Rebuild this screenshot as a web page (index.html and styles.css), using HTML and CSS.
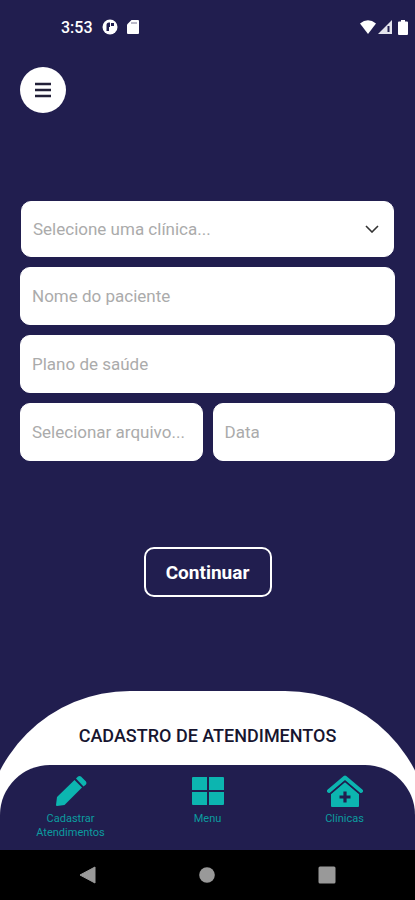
FILE: index.html
```html
<!DOCTYPE html>
<html lang="pt-BR">
<head>
  <meta charset="UTF-8" />
  <meta name="viewport" content="width=device-width, initial-scale=1.0"/>
  <title>Cadastro de Atendimentos</title>
  <link rel="stylesheet" href="styles.css">
</head>
<body>
  <div class="status-bar">
    <div class="status-left">
      <span class="clock">3:53</span>
      <svg width="16" height="16" viewBox="0 0 16 16">
        <circle cx="8" cy="8" r="7.5" fill="#fff"/>
        <path d="M4.500 12V6q0-2.500 2.500-2.500h1V8H7v4zM9 4h3v3H9z" fill="#211e4f"/>
      </svg>
      <svg width="12" height="14" viewBox="0 0 12 14">
        <path d="M4.5 0H11q1 0 1 1v12q0 1-1 1H1q-1 0-1-1V4.500z" fill="#fff"/>
        <path d="M5 2v2M7 2v2M9 2v2" stroke="#777591"/>
      </svg>
    </div>
    <div class="status-right">
      <svg width="16" height="14" viewBox="0 0 16 14">
        <path d="M0 3.500Q8-3 16 3.500L8 14z" fill="#fff"/>
      </svg>
      <svg width="14" height="14" viewBox="0 0 14 14">
        <path d="M14 0v14H0z" fill="#e4e4ec"/>
        <path d="M10.500 6v6" stroke="#211e4f" stroke-width="2"/>
      </svg>
      <svg class="battery" width="10" height="15" viewBox="0 0 10 15">
        <path d="M3 0h4v1.500h2q1 0 1 1V14q0 1-1 1H1q-1 0-1-1V2.500q0-1 1-1h2z" fill="#fff"/>
      </svg>
    </div>
  </div>

  <header class="header">
    <button class="menu-btn" type="button" aria-label="Abrir menu">
      <svg width="18" height="16" viewBox="0 0 18 16">
        <path d="M1 2h16M1 8h16M1 14h16" stroke="#222038" stroke-width="2.400"/>
      </svg>
    </button>
  </header>

  <main>
    <form class="form">
      <div class="select-box">
        <select class="field select" aria-label="Clínica">
          <option>Selecione uma clínica...</option>
        </select>
        <svg class="chevron" width="14" height="8" viewBox="0 0 14 8">
          <path d="M1 1l6 6 6-6" fill="none" stroke="#333" stroke-width="1.600"/>
        </svg>
      </div>
      <input class="field" type="text" placeholder="Nome do paciente" aria-label="Nome do paciente">
      <input class="field" type="text" placeholder="Plano de saúde" aria-label="Plano de saúde">
      <div class="row">
        <input class="field" type="text" placeholder="Selecionar arquivo..." aria-label="Selecionar arquivo">
        <input class="field" type="text" placeholder="Data" aria-label="Data">
      </div>
      <button class="submit-btn" type="button">Continuar</button>
    </form>
  </main>

  <footer class="footer">
    <div class="title-panel">
      <h1>CADASTRO DE ATENDIMENTOS</h1>
    </div>
    <nav class="tabs">
      <a class="tab" href="#">
        <svg width="32" height="32" viewBox="0 0 32 32">
          <path d="M1 30l1-8L19.500 5l7.500 7.500L9.500 30l-7.500 1q-1 0-1-1zM21 3.500l2-2q1.500-1 3 0l5 5q1 1.500 0 3l-2.500 2z" fill="#0cb5b0"/>
        </svg>
        <span>Cadastrar<br>Atendimentos</span>
      </a>
      <a class="tab" href="#">
        <svg width="32" height="32" viewBox="0 0 32 32">
          <path d="M1 2h14v13H0V3q0-1 1-1zM17 2h14q1 0 1 1v12H17zM0 17h15v13H1q-1 0-1-1zM17 17h15v12q0 1-1 1H17z" fill="#0cb5b0"/>
        </svg>
        <span>Menu</span>
      </a>
      <a class="tab" href="#">
        <svg width="36" height="32" viewBox="0 0 36 32">
          <path d="M2 16L18 2.500 34 16" fill="none" stroke="#0cb5b0" stroke-width="4" stroke-linecap="round" stroke-linejoin="round"/>
          <path d="M18 7l14 12v12q0 1-1 1H5q-1 0-1-1V19z" fill="#0cb5b0"/>
          <path d="M4 18.200L18 6.200l14 12" fill="none" stroke="#211e4f" stroke-width="1.200"/>
          <path d="M18 16.500v11M12.500 22h11" stroke="#211e4f" stroke-width="3.200"/>
        </svg>
        <span>Clínicas</span>
      </a>
    </nav>
  </footer>

  <div class="system-bar">
    <button type="button" aria-label="Voltar">
      <svg width="18" height="18" viewBox="0 0 18 18"><path d="M16 1v16L1 9z" fill="#999" stroke="#999" stroke-linejoin="round"/></svg>
    </button>
    <button type="button" aria-label="Início">
      <svg width="18" height="18" viewBox="0 0 18 18"><circle cx="9" cy="9" r="7.800" fill="#999"/></svg>
    </button>
    <button type="button" aria-label="Recentes">
      <svg width="18" height="18" viewBox="0 0 18 18"><rect x="0.500" y="0.500" width="17" height="17" rx="1.500" fill="#999"/></svg>
    </button>
  </div>
</body>
</html>
```

FILE: styles.css
```css
* {
  box-sizing: border-box;
}
body {
  margin: 0;
  min-height: 100vh;
  display: flex;
  flex-direction: column;
  background-color: #211e4f;
  font-family: Roboto, "Liberation Sans", sans-serif;
  overflow-x: hidden;
}
button {
  font-family: inherit;
  cursor: pointer;
}
svg {
  display: block;
}

.status-bar {
  display: flex;
  justify-content: space-between;
  align-items: center;
  height: 54px;
  padding: 0 7px 0 61px;
  color: #fff;
}
.status-left {
  display: flex;
  align-items: center;
  gap: 9px;
}
.status-right {
  display: flex;
  align-items: center;
  gap: 2px;
}
.battery {
  margin-left: 4px;
}
.clock {
  font-size: 16px;
  font-weight: 500;
}

.header {
  padding: 13px 20px 0;
}
.menu-btn {
  display: flex;
  align-items: center;
  justify-content: center;
  width: 46px;
  height: 46px;
  padding: 0;
  border: none;
  border-radius: 50%;
  background-color: #fff;
}

main {
  flex: 1;
  padding: 88px 20px 0;
}
.form {
  display: flex;
  flex-direction: column;
  gap: 10px;
}
.field {
  width: 100%;
  min-width: 0;
  height: 58px;
  padding: 0 11px;
  border: 1px solid #fff;
  border-radius: 10px;
  background-color: #fff;
  color: #333;
  font-family: inherit;
  font-size: 17px;
}
.field::placeholder {
  color: #ababab;
  opacity: 1;
}
.select-box {
  display: grid;
  align-items: center;
  padding: 0 1px;
}
.select-box > * {
  grid-area: 1 / 1;
}
.select {
  height: 56px;
  appearance: none;
  color: #ababab;
}
.chevron {
  justify-self: end;
  margin-right: 15px;
  pointer-events: none;
}
.row {
  display: grid;
  grid-template-columns: 1fr 1fr;
  gap: 10px;
}
.submit-btn {
  align-self: center;
  width: 128px;
  height: 50px;
  margin-top: 76px;
  padding: 0;
  border: 2px solid #fff;
  border-radius: 10px;
  background: none;
  color: #fff;
  font-size: 19px;
  font-weight: 700;
}

/* the white panel is wider than the screen so its corners are cut off */
.footer {
  overflow: hidden;
}
.title-panel {
  height: 159px;
  margin: 0 -16px;
  padding-top: 34px;
  border-radius: 146px 146px 0 0;
  background-color: #fff;
  text-align: center;
}
.title-panel h1 {
  margin: 0;
  color: #17152f;
  font-size: 18px;
  font-weight: 500;
  line-height: 22px;
}
.tabs {
  display: grid;
  grid-template-columns: repeat(3, 1fr);
  height: 85px;
  margin-top: -85px;
  padding: 10px 2px 0;
  border-radius: 50px 50px 0 0;
  background-color: #211e4f;
}
.tab {
  display: flex;
  flex-direction: column;
  align-items: center;
  gap: 5px;
  color: #0c9c9f;
  font-size: 11px;
  line-height: 14px;
  text-align: center;
  text-decoration: none;
}

.system-bar {
  display: grid;
  grid-template-columns: repeat(3, 1fr);
  height: 50px;
  padding: 0 28px;
  background-color: #000;
}
.system-bar button {
  display: flex;
  align-items: center;
  justify-content: center;
  padding: 0;
  border: none;
  background: none;
}
```
